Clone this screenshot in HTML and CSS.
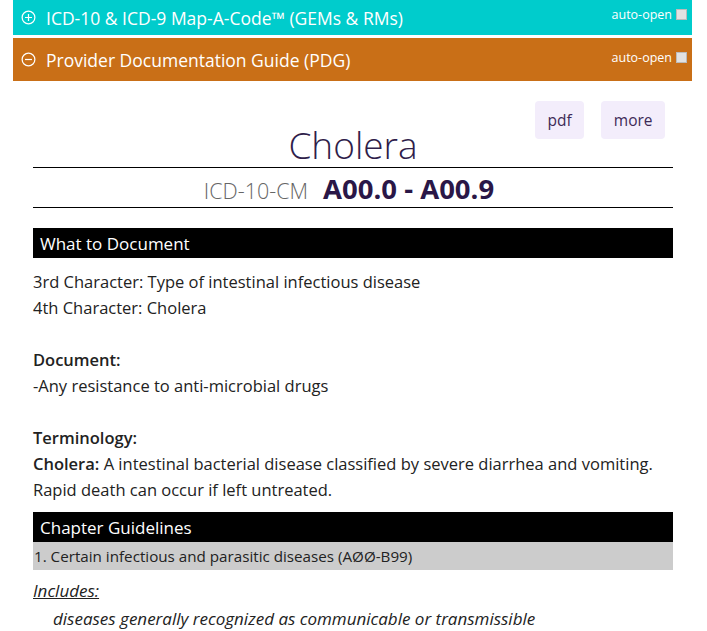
FILE: index.html
```html
<!DOCTYPE html>
<html>

<head>
    <title>Cholera - PDG</title>
    <link rel="stylesheet" href="styles.css">
</head>

<body>
    <div class="panels">
        <div class="panel-bar gems">
            <span class="toggle">
                <svg width="15" height="15" viewBox="0 0 16 16"><circle cx="8" cy="8" r="6.8" fill="none" stroke="#fff" stroke-width="1.3"/><path d="M8 4.3v7.4M4.3 8h7.4" stroke="#fff" stroke-width="1.3"/></svg>
                ICD-10 &amp; ICD-9 Map-A-Code™ (GEMs &amp; RMs)
            </span>
            <label class="auto-open">auto-open <input type="checkbox"></label>
        </div>

        <div class="panel-bar pdg">
            <span class="toggle">
                <svg width="15" height="15" viewBox="0 0 16 16"><circle cx="8" cy="8" r="6.8" fill="none" stroke="#fff" stroke-width="1.3"/><path d="M4.3 8h7.4" stroke="#fff" stroke-width="1.3"/></svg>
                Provider Documentation Guide (PDG)
            </span>
            <label class="auto-open">auto-open <input type="checkbox"></label>
        </div>

        <div class="pdg-body">
            <div class="doc-title">
                <span></span>
                <h1>Cholera</h1>
                <div class="doc-buttons">
                    <button type="button">pdf</button>
                    <button type="button">more</button>
                </div>
            </div>

            <div class="code-range">
                <span class="code-set">ICD-10-CM</span>
                <span class="codes">A00.0 - A00.9</span>
            </div>

            <h2 class="section-head">What to Document</h2>
            <p class="section-text">
                3rd Character: Type of intestinal infectious disease<br>
                4th Character: Cholera<br>
                <br>
                <b>Document:</b><br>
                -Any resistance to anti-microbial drugs<br>
                <br>
                <b>Terminology:</b><br>
                <b>Cholera:</b> A intestinal bacterial disease classified by severe diarrhea and vomiting. Rapid death can occur if left untreated.
            </p>

            <h2 class="section-head">Chapter Guidelines</h2>
            <div class="chapter">1. Certain infectious and parasitic diseases (AØØ-B99)</div>
            <p class="includes-label">Includes:</p>
            <p class="includes-text">diseases generally recognized as communicable or transmissible</p>
        </div>
    </div>
</body>

</html>
```

FILE: styles.css
```css
body {
    margin: 0;
    font-family: "Open Sans", "Noto Sans", sans-serif;
    color: #222;
    background-color: #fff;
}

.panels {
    width: 679px;
    margin-left: 13px;
}

.panel-bar {
    display: flex;
    justify-content: space-between;
    align-items: center;
    color: #fff;
    padding: 0 5px 0 8px;
}

.panel-bar.gems {
    background-color: #00cccc;
    height: 35px;
}

.panel-bar.pdg {
    background-color: #c96f17;
    height: 43px;
    margin-top: 3px;
}

.toggle {
    display: flex;
    align-items: center;
    gap: 10px;
    font-size: 17.5px;
}

.auto-open {
    display: flex;
    align-items: center;
    font-size: 12.5px;
    gap: 4px;
}

.gems .auto-open {
    margin-top: -6px;
}

.pdg .auto-open {
    margin-top: -4px;
}

.auto-open input {
    width: 11px;
    height: 11px;
    margin: 0;
    appearance: none;
    background-color: #e2e2e2;
    border: 1px solid #bbb;
}

.pdg-body {
    padding: 0 19px 0 20px;
}

.doc-title {
    display: grid;
    grid-template-columns: 1fr auto 1fr;
    align-items: start;
    border-bottom: 1px solid #000;
    padding-top: 20px;
}

.doc-title h1 {
    margin: 22px 0 0;
    font-size: 37px;
    font-weight: 300;
    line-height: 44px;
    color: #2f1d4a;
}

.doc-buttons {
    justify-self: end;
    display: flex;
    gap: 17px;
    margin-right: 8px;
}

.doc-buttons button {
    font-family: inherit;
    font-size: 15.5px;
    color: #3d2a57;
    background-color: #f3edfb;
    border: none;
    border-radius: 4px;
    height: 38px;
    padding: 0 12.5px;
}

.code-range {
    display: flex;
    justify-content: center;
    align-items: baseline;
    gap: 15px;
    height: 39px;
    line-height: 42px;
    border-bottom: 1px solid #000;
    padding-right: 8px;
}

.code-set {
    font-size: 21.5px;
    font-weight: 300;
    color: #666;
}

.codes {
    font-size: 27.5px;
    font-weight: 700;
    color: #2a1747;
}

.section-head {
    margin: 20px 0 0;
    background-color: #000;
    color: #fff;
    font-size: 17px;
    font-weight: 400;
    height: 30px;
    line-height: 31px;
    padding-left: 7px;
}

.section-text {
    margin: 11px 0 9px;
    font-size: 16.5px;
    line-height: 26px;
}

.section-text + .section-head {
    margin-top: 0;
}

.section-text b {
    font-weight: 600;
}

.chapter {
    background-color: #cccccc;
    font-size: 15.2px;
    height: 28px;
    line-height: 28px;
    padding-left: 1px;
}

.includes-label {
    margin: 8px 0 0;
    font-size: 17px;
    font-style: italic;
    text-decoration: underline;
    line-height: 26px;
}

.includes-text {
    margin: 2px 0 0 20px;
    font-size: 17px;
    font-style: italic;
    line-height: 26px;
}
```
